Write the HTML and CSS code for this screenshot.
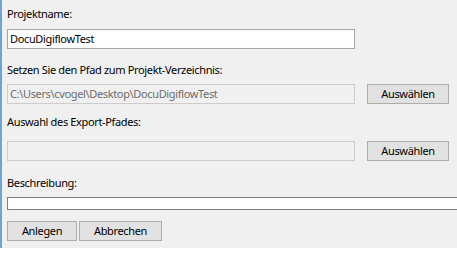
FILE: index.html
```html
<!DOCTYPE html>
<html>
<head>
<meta charset="utf-8">
<link rel="stylesheet" href="styles.css">
</head>
<body>
<div class="form">
  <div class="label l1">Projektname:</div>
  <div class="field name">DocuDigiflowTest</div>
  <div class="label l2">Setzen Sie den Pfad zum Projekt-Verzeichnis:</div>
  <div class="row r1">
    <div class="field disabled">C:\Users\cvogel\Desktop\DocuDigiflowTest</div>
    <div class="btn pick">Auswählen</div>
  </div>
  <div class="label l3">Auswahl des Export-Pfades:</div>
  <div class="row r2">
    <div class="field disabled"></div>
    <div class="btn pick">Auswählen</div>
  </div>
  <div class="label l4">Beschreibung:</div>
  <div class="desc"></div>
  <div class="actions">
    <div class="btn create">Anlegen</div>
    <div class="btn cancel">Abbrechen</div>
  </div>
</div>
</body>
</html>
```
FILE: styles.css
```css
html, body {
  margin: 0;
  padding: 0;
  background: #ffffff;
}
body {
  width: 457px;
  height: 255px;
  overflow: hidden;
  font-family: "Noto Sans", "Open Sans", sans-serif;
  font-size: 11px;
  letter-spacing: -0.35px;
  color: #000;
}
.form {
  height: 248px;
  box-sizing: border-box;
  background: #f0f0f0;
  border-left: 2px solid #6aa5da;
  padding: 5px 0 0 5px;
  display: flex;
  flex-direction: column;
}
.label {
  height: 16px;
  line-height: 17px;
  white-space: nowrap;
}
.l2 { margin-top: 12px; }
.l3 { margin-top: 9px; }
.l4 { margin-top: 13px; }
.field {
  box-sizing: border-box;
  height: 20px;
  line-height: 18px;
  padding-left: 2px;
  border: 1px solid #a6a6a6;
  background: #fff;
  white-space: nowrap;
  overflow: hidden;
}
.name {
  width: 348px;
  margin-top: 8px;
}
.row {
  display: flex;
  gap: 12px;
  margin-top: 7px;
}
.r2 { margin-top: 12px; }
.row .field {
  width: 348px;
}
.disabled {
  background: #f0f0f0;
  border-color: #cccccc;
  color: #6d6d6d;
}
.btn {
  box-sizing: border-box;
  height: 20px;
  line-height: 18px;
  text-align: center;
  background: #e1e1e1;
  border: 1px solid #adadad;
  white-space: nowrap;
}
.pick { width: 82px; }
.desc {
  box-sizing: border-box;
  margin-top: 7px;
  height: 13px;
  width: 460px;
  background: #fff;
  border: 1px solid #7f7f7f;
  border-right: none;
}
.actions {
  display: flex;
  gap: 2px;
  margin-top: 11px;
}
.create { width: 70px; }
.cancel { width: 83px; }
```
